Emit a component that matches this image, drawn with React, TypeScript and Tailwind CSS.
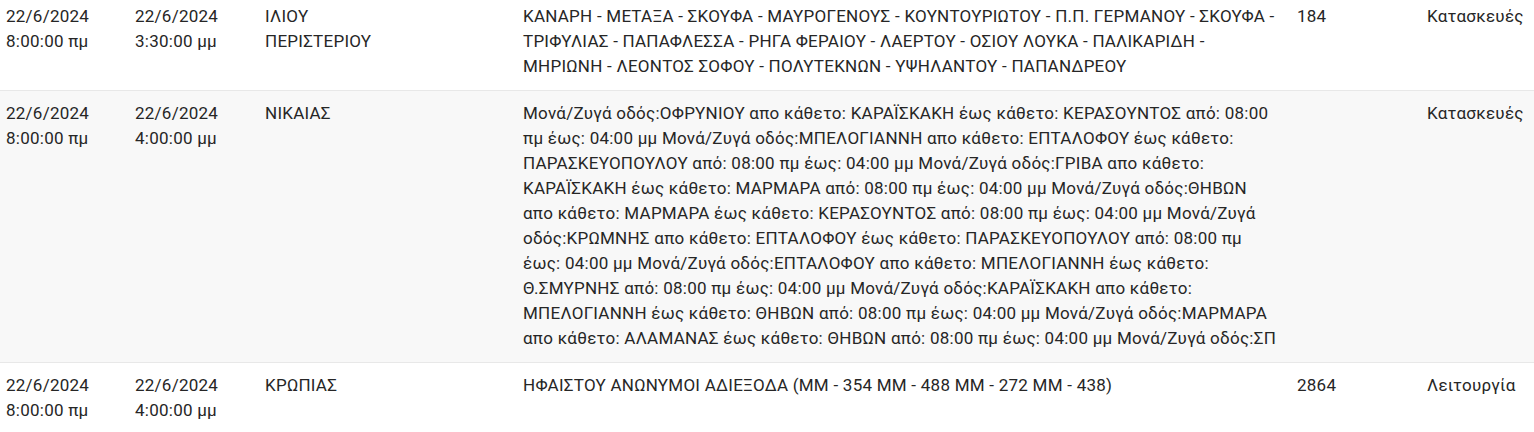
import React from "react";

type Row = {
  start: [string, string];
  end: [string, string];
  area: string;
  desc: string;
  num: string;
  kind: string;
  striped?: boolean;
};

const rows: Row[] = [
  {
    start: ["22/6/2024", "8:00:00 πμ"],
    end: ["22/6/2024", "3:30:00 μμ"],
    area: "ΙΛΙΟΥ ΠΕΡΙΣΤΕΡΙΟΥ",
    desc:
      "ΚΑΝΑΡΗ - ΜΕΤΑΞΑ - ΣΚΟΥΦΑ - ΜΑΥΡΟΓΕΝΟΥΣ - ΚΟΥΝΤΟΥΡΙΩΤΟΥ - Π.Π. ΓΕΡΜΑΝΟΥ - ΣΚΟΥΦΑ - ΤΡΙΦΥΛΙΑΣ - ΠΑΠΑΦΛΕΣΣΑ - ΡΗΓΑ ΦΕΡΑΙΟΥ - ΛΑΕΡΤΟΥ - ΟΣΙΟΥ ΛΟΥΚΑ - ΠΑΛΙΚΑΡΙΔΗ - ΜΗΡΙΩΝΗ - ΛΕΟΝΤΟΣ ΣΟΦΟΥ - ΠΟΛΥΤΕΚΝΩΝ - ΥΨΗΛΑΝΤΟΥ - ΠΑΠΑΝΔΡΕΟΥ",
    num: "184",
    kind: "Κατασκευές",
  },
  {
    start: ["22/6/2024", "8:00:00 πμ"],
    end: ["22/6/2024", "4:00:00 μμ"],
    area: "ΝΙΚΑΙΑΣ",
    desc:
      "Μονά/Ζυγά οδός:ΟΦΡΥΝΙΟΥ απο κάθετο: ΚΑΡΑΪΣΚΑΚΗ έως κάθετο: ΚΕΡΑΣΟΥΝΤΟΣ από: 08:00 πμ έως: 04:00 μμ Μονά/Ζυγά οδός:ΜΠΕΛΟΓΙΑΝΝΗ απο κάθετο: ΕΠΤΑΛΟΦΟΥ έως κάθετο: ΠΑΡΑΣΚΕΥΟΠΟΥΛΟΥ από: 08:00 πμ έως: 04:00 μμ Μονά/Ζυγά οδός:ΓΡΙΒΑ απο κάθετο: ΚΑΡΑΪΣΚΑΚΗ έως κάθετο: ΜΑΡΜΑΡΑ από: 08:00 πμ έως: 04:00 μμ Μονά/Ζυγά οδός:ΘΗΒΩΝ απο κάθετο: ΜΑΡΜΑΡΑ έως κάθετο: ΚΕΡΑΣΟΥΝΤΟΣ από: 08:00 πμ έως: 04:00 μμ Μονά/Ζυγά οδός:ΚΡΩΜΝΗΣ απο κάθετο: ΕΠΤΑΛΟΦΟΥ έως κάθετο: ΠΑΡΑΣΚΕΥΟΠΟΥΛΟΥ από: 08:00 πμ έως: 04:00 μμ Μονά/Ζυγά οδός:ΕΠΤΑΛΟΦΟΥ απο κάθετο: ΜΠΕΛΟΓΙΑΝΝΗ έως κάθετο: Θ.ΣΜΥΡΝΗΣ από: 08:00 πμ έως: 04:00 μμ Μονά/Ζυγά οδός:ΚΑΡΑΪΣΚΑΚΗ απο κάθετο: ΜΠΕΛΟΓΙΑΝΝΗ έως κάθετο: ΘΗΒΩΝ από: 08:00 πμ έως: 04:00 μμ Μονά/Ζυγά οδός:ΜΑΡΜΑΡΑ απο κάθετο: ΑΛΑΜΑΝΑΣ έως κάθετο: ΘΗΒΩΝ από: 08:00 πμ έως: 04:00 μμ Μονά/Ζυγά οδός:ΣΠ",
    num: "",
    kind: "Κατασκευές",
    striped: true,
  },
  {
    start: ["22/6/2024", "8:00:00 πμ"],
    end: ["22/6/2024", "4:00:00 μμ"],
    area: "ΚΡΩΠΙΑΣ",
    desc: "ΗΦΑΙΣΤΟΥ ΑΝΩΝΥΜΟΙ ΑΔΙΕΞΟΔΑ (ΜΜ - 354 ΜΜ - 488 ΜΜ - 272 ΜΜ - 438)",
    num: "2864",
    kind: "Λειτουργία",
  },
];

export default function App() {
  return (
    <div
      className="w-[1534px] h-[432px] overflow-hidden bg-white text-[#262626] text-[17px] leading-[25px] tracking-[0.25px]"
      style={{ fontFamily: "Roboto, 'Noto Sans', sans-serif" }}
    >
      <div className="-mt-[6px]">
        {rows.map((r, i) => (
          <div
            key={i}
            className={`grid grid-cols-[129px_130px_129px_129px_774px_130px_1fr] border-b border-[#e8e8e8] ${
              r.striped ? "bg-[#f8f8f8]" : "bg-white"
            }`}
          >
            <div className="px-[6px] pt-[10px] pb-[11px]">
              <div>{r.start[0]}</div>
              <div>{r.start[1]}</div>
            </div>
            <div className="px-[6px] pt-[10px] pb-[11px]">
              <div>{r.end[0]}</div>
              <div>{r.end[1]}</div>
            </div>
            <div className="px-[6px] pt-[10px] pb-[11px]">{r.area}</div>
            <div className="px-[6px] pt-[10px] pb-[11px]"></div>
            <div className="pl-[6px] pr-[12px] pt-[10px] pb-[11px]">{r.desc}</div>
            <div className="px-[6px] pt-[10px] pb-[11px]">{r.num}</div>
            <div className="px-[6px] pt-[10px] pb-[11px]">{r.kind}</div>
          </div>
        ))}
      </div>
    </div>
  );
}
